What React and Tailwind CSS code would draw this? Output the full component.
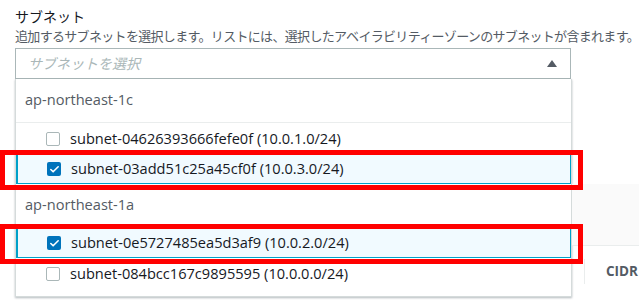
import { Check } from 'lucide-react';

const groups = [
  {
    zone: 'ap-northeast-1c',
    subnets: [
      { id: 'subnet-04626393666fefe0f', cidr: '10.0.1.0/24', checked: false, h: 'h-[31px]' },
      { id: 'subnet-03add51c25a45cf0f', cidr: '10.0.3.0/24', checked: true, h: 'h-[30px]' },
    ],
  },
  {
    zone: 'ap-northeast-1a',
    subnets: [
      { id: 'subnet-0e5727485ea5d3af9', cidr: '10.0.2.0/24', checked: true, h: 'h-[30px]' },
      { id: 'subnet-084bcc167c9895595', cidr: '10.0.0.0/24', checked: false, h: 'h-[31px]' },
    ],
  },
];

function Checkbox({ checked }) {
  return checked
    ? <span className="flex h-[14px] w-[14px] items-center justify-center rounded-[2px] bg-[#0073bb] text-white"><Check size={11} strokeWidth={3.5}/></span>
    : <span className="h-[14px] w-[14px] rounded-[2px] border border-[#aab7b8] bg-white"/>;
}

function Option({ s }) {
  return <div className={`flex items-center gap-[10px] ${s.h} ${s.checked ? 'border border-l-2 border-[#00a1c9] bg-[#f1faff] pl-[29px]' : 'pl-[30px]'}`}>
    <Checkbox checked={s.checked}/>
    <span className="text-[14.6px] text-[#16191f]">{s.id} ({s.cidr})</span>
  </div>;
}

export default function App() {
  return <div className="relative h-[304px] w-[639px] overflow-hidden bg-white font-['Open_Sans','Noto_Sans_CJK_JP',sans-serif]">
    <div className="pl-[15px] pt-[7px]">
      <div className="text-[14px] leading-[20px] text-[#16191f]">サブネット</div>
      <div className="whitespace-nowrap text-[13px] leading-[18px] tracking-[-0.68px] text-[#545b64]">追加するサブネットを選択します。リストには、選択したアベイラビリティーゾーンのサブネットが含まれます。</div>
      <div className="mt-[3px] flex h-[31px] w-[556px] items-center justify-between border border-[#aab7b8] pl-[12px] pr-[13px]">
        <span className="text-[14px] italic text-[#aab7b8]">サブネットを選択</span>
        <svg width="10" height="7" viewBox="0 0 10 7"><path d="M5 0L10 7H0z" fill="#545b64"/></svg>
      </div>
    </div>
    <div className="flex">
      <div className="ml-[15px] w-[557px] border-x border-b border-[#d5dbdb] bg-white shadow-[0_1px_2px_rgba(0,28,36,0.3)]">
        {groups.map((g) => <div key={g.zone}>
          <div className="flex h-[44px] items-center border-b border-[#eaeded] pb-[2px] pl-[9px] text-[14.6px] text-[#545b64]">{g.zone}</div>
          {g.subnets.map((s) => <Option key={s.id} s={s}/>)}
        </div>)}
      </div>
      <div className="flex flex-1 flex-col pt-[105px]">
        <div className="h-[62px] border-b border-[#eaeded] bg-[#fafafa]"/>
        <div className="flex h-[51px] items-center">
          <div className="h-[25px] w-[13px] border-r border-[#eaeded]"/>
          <span className="pl-[21px] text-[13.5px] font-bold text-[#545b64]">CIDR</span>
        </div>
      </div>
    </div>
    <div className="mt-[8px] border-t border-[#eaeded]"/>
    <div className="absolute left-0 top-[150px] h-[40px] w-[583px] border-[5px] border-[#ff0000]"/>
    <div className="absolute left-0 top-[224px] h-[40px] w-[583px] border-[5px] border-[#ff0000]"/>
  </div>;
}
